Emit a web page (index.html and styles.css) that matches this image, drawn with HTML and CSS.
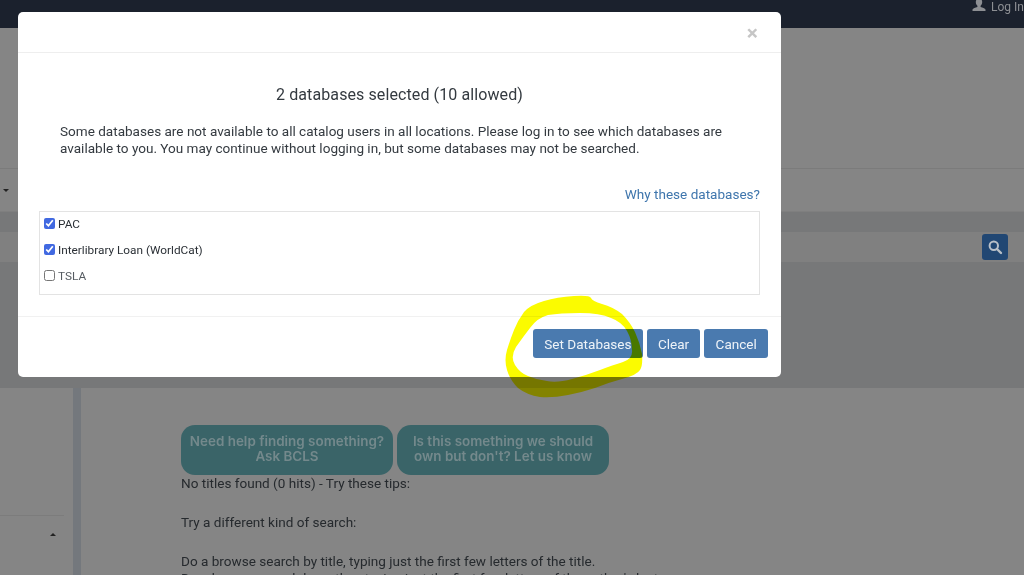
FILE: index.html
```html
<!DOCTYPE html>
<html lang="en">
<head>
<meta charset="utf-8">
<title>Set Databases</title>
<link rel="stylesheet" href="styles.css">
</head>
<body>
<div class="page">
  <header class="topbar">
    <a class="login">
      <svg class="user" viewBox="0 0 14 14" width="14" height="14"><path d="M7 0.5c2 0 3.2 1.5 3.2 3.6 0 1.6-.7 3-1.6 3.7v1.1c2 .6 4.4 1.4 4.9 2.6v1.5H.5V11.500c.5-1.200 2.900-2 4.900-2.600V7.800C4.500 7.100 3.800 5.700 3.800 4.100 3.800 2 5 .5 7 .5z"/></svg>
      <span>Log In</span>
    </a>
  </header>
  <section class="hero"></section>
  <section class="toolbar"><span class="caret-down"></span></section>
  <section class="searchband">
    <div class="searchrow">
      <span class="searchbtn">
        <svg viewBox="0 0 16 16" width="16" height="16"><circle cx="6.800" cy="6.800" r="4.200" fill="none" stroke="#b9c0c8" stroke-width="2"/><path d="M10 10l4 4" stroke="#b9c0c8" stroke-width="2.400" stroke-linecap="round"/></svg>
      </span>
    </div>
  </section>
  <div class="lower">
    <aside class="side">
      <div class="sidehead"><span class="caret-up"></span></div>
    </aside>
    <main class="main">
      <div class="pills">
        <a class="pill pill-a">Need help finding something?<br>Ask BCLS</a>
        <a class="pill pill-b">Is this something we should<br>own but don't? Let us know</a>
      </div>
      <p>No titles found (0 hits) - Try these tips:</p>
      <p>Try a different kind of search:</p>
      <p>Do a browse search by title, typing just the first few letters of the title.<br>Do a browse search by author, typing just the first few letters of the author's last name.</p>
    </main>
  </div>
</div>

<div class="modal">
  <div class="modal-head"><span class="close">×</span></div>
  <div class="modal-body">
    <h2 class="title">2 databases selected (10 allowed)</h2>
    <p class="note">Some databases are not available to all catalog users in all locations. Please log in to see which databases are available to you. You may continue without logging in, but some databases may not be searched.</p>
    <div class="why"><a>Why these databases?</a></div>
    <div class="dblist">
      <label class="db"><input type="checkbox" checked>PAC</label>
      <label class="db"><input type="checkbox" checked>Interlibrary Loan (WorldCat)</label>
      <label class="db db-off"><input type="checkbox">TSLA</label>
    </div>
  </div>
  <div class="modal-foot">
    <button class="btn btn-set">Set Databases</button>
    <button class="btn">Clear</button>
    <button class="btn">Cancel</button>
  </div>
</div>

<svg class="scribble" viewBox="0 0 1024 575" width="1024" height="575">
  <path fill-rule="evenodd" d="M574 296Q557 297 544 301Q530 305 524 312Q518 320 514 330Q510 340 507 350Q504 360 507 370Q510 380 518 388Q527 395 540 397Q553 398 568 395Q583 392 595 388Q607 383 622 379Q637 375 640 370Q643 365 642 354Q640 343 635 332Q630 322 622 314Q613 307 602 304Q592 301 591 298Q590 295 574 296ZM548 315Q537 318 530 328Q523 337 516 347Q510 357 515 365Q520 373 528 376Q537 380 547 381Q557 383 572 379Q587 375 600 370Q613 365 623 362Q633 359 632 350Q632 340 627 331Q622 322 611 318Q600 313 580 313Q560 313 548 315Z"/>
</svg>
</body>
</html>
```
FILE: styles.css
```css
* { box-sizing: border-box; }
html, body { margin: 0; height: 575px; overflow: hidden; }
body { font-family: Roboto, "Liberation Sans", sans-serif; font-size: 13.550px; color: #212529; background: #858585; }
.page { height: 575px; display: flex; flex-direction: column; overflow: hidden; }

.topbar { height: 28px; flex: none; background: #1b212d; display: flex; justify-content: flex-end; }
.login { display: flex; align-items: flex-start; gap: 5px; color: #8d8f93; font-size: 12px; line-height: 14px; }
.login span { width: 33px; white-space: nowrap; }
.user { fill: #8d8f93; margin-top: -2px; }

.hero { height: 140px; flex: none; background: #858585; }
.toolbar { height: 44px; flex: none; background: #858585; border-top: 1px solid #7b7b7b; border-bottom: 1px solid #7f7f7f; display: flex; align-items: center; }
.caret-down { width: 0; height: 0; border: 3px solid transparent; border-top: 3px solid #222; border-bottom: 0; margin-left: 3px; margin-top: 1px; }

.searchband { height: 176px; flex: none; background: #777879; padding-top: 20px; }
.searchrow { height: 30px; background: #808080; display: flex; justify-content: flex-end; align-items: center; padding-right: 16px; }
.searchbtn { width: 26px; height: 26px; border-radius: 3px; background: #214773; display: flex; align-items: center; justify-content: center; }

.lower { flex: 1; display: flex; min-height: 0; }
.side { width: 73px; flex: none; background: #858585; padding-top: 127px; }
.sidehead { border-top: 1px solid #7c7c7c; width: 64px; height: 37px; display: flex; align-items: center; justify-content: flex-end; padding-right: 8px; }
.caret-up { width: 0; height: 0; border: 3px solid transparent; border-bottom: 3px solid #222; border-top: 0; }
.main { flex: 1; margin-left: 8px; background: #858585; padding: 37px 0 0 100px; box-shadow: -8px 0 0 #74787d; color: #262a2e; line-height: 17px; }
.main p { margin: 0 0 22px; white-space: nowrap; }
.pills { display: flex; gap: 4px; height: 50px; }
.pill { width: 212px; height: 50px; border-radius: 14px; background: #3a6468; color: #74898c; font-family: Inter, Roboto, sans-serif; font-weight: 600; text-align: center; font-size: 13.450px; line-height: 14.500px; padding-top: 9px; }

.modal { position: absolute; left: 18px; top: 12px; width: 763px; height: 365px; background: #fff; border-radius: 5px; display: flex; flex-direction: column; color: #343a40; }
.modal-head { height: 41px; flex: none; border-bottom: 1px solid #eeeeee; display: flex; justify-content: flex-end; padding-right: 23px; }
.close { font-size: 21px; font-weight: 700; color: #c6c6c6; line-height: 42px; }
.modal-body { flex: 1; padding: 0 21px 0 21px; display: flex; flex-direction: column; min-height: 0; }
.title { margin: 32px 0 0; font-size: 16px; line-height: 20px; font-weight: 400; text-align: center; letter-spacing: 0.100px; }
.note { margin: 18px 0 0 21px; font-size: 13.550px; line-height: 17px; width: 680px; }
.why { margin-top: 29px; text-align: right; font-size: 13.550px; line-height: 17px; color: #3f76ad; }
.dblist { margin-top: 8px; height: 84px; border: 1px solid #e3e3e3; display: flex; flex-direction: column; font-size: 11.800px; color: #2b3036; }
.db { height: 26px; padding: 0 0 2px 4px; display: flex; align-items: center; }
.db input { margin: 0 3px 2px 0; width: 11px; height: 11px; accent-color: #4169e1; }
.db-off { color: #555b61; }
.modal-foot { height: 61px; flex: none; border-top: 1px solid #f1f1f1; display: flex; justify-content: flex-end; gap: 4px; padding: 12px 13px 0 0; }
.btn { height: 29px; padding: 0 11.200px; border: 0; border-radius: 3px; background: #4a7aaf; color: #eef3f8; font-family: Roboto, "Liberation Sans", sans-serif; font-size: 13.550px; }

.scribble { position: absolute; left: 0; top: 0; pointer-events: none; mix-blend-mode: multiply; }
.scribble path { fill: #fbfb00; }
```
